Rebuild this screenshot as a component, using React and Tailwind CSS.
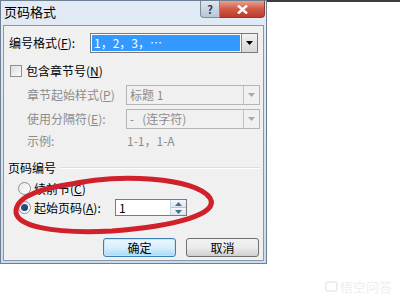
import React from "react";

const F = { fontFamily: '"Noto Sans CJK SC", "Noto Sans", sans-serif' };

function Arrow({ color = "#000" }) {
  return (
    <svg width="7" height="4" viewBox="0 0 7 4">
      <path d="M0 0 L7 0 L3.5 4 Z" fill={color} />
    </svg>
  );
}

function Combo({ width, children, disabled, selected }) {
  return (
    <div
      className={`flex h-[20px] border ${disabled ? "border-[#b5b5b5] bg-[#f0f0f0]" : "border-[#7a7a7a] bg-white"}`}
      style={{ width }}
    >
      <div className="flex-1 flex items-center p-[1px]">
        <div
          className={`h-full w-full flex items-center pl-[2px] text-[12px] leading-none ${selected ? "bg-[#3399ff] text-white" : disabled ? "text-[#8c8c8c]" : "text-black"}`}
        >
          {children}
        </div>
      </div>
      <div
        className={`w-[16px] flex items-center justify-center border-l ${disabled ? "border-[#c3c3c3] bg-[#f0f0f0]" : "border-[#8a8a8a] bg-gradient-to-b from-[#f2f2f2] to-[#d6d6d6]"}`}
      >
        <Arrow color={disabled ? "#a8a8a8" : "#000"} />
      </div>
    </div>
  );
}

function Radio({ checked }) {
  return (
    <div className="w-[13px] h-[13px] rounded-full border border-[#8e8f8f] bg-gradient-to-br from-[#e8e8e8] to-[#ffffff] flex items-center justify-center">
      {checked && <div className="w-[7px] h-[7px] rounded-full bg-gradient-to-br from-[#2a5c8f] to-[#1b3b66]" />}
    </div>
  );
}

export default function App() {
  return (
    <div className="w-[400px] h-[300px] bg-white relative overflow-hidden flex" style={F}>
      {/* Dialog window */}
      <div className="w-[267px] h-[264px] border border-[#6e7f94] bg-gradient-to-b from-[#e2ebf5] to-[#cddcec] flex flex-col shrink-0">
        {/* title bar */}
        <div className="h-[24px] flex items-start">
          <div className="pl-[3px] pt-[3px] text-[13px] leading-[16px] text-black">页码格式</div>
          <div className="flex-1" />
          <div className="w-[20px] h-[17px] border border-t-0 border-[#7d8a99] rounded-bl-[4px] bg-gradient-to-b from-[#dfe6ee] to-[#b9c6d4] flex items-center justify-center text-[11px] font-bold text-[#2d3b4c] leading-none">
            ?
          </div>
          <div className="w-[45px] h-[17px] border border-t-0 border-l-0 border-[#8a3b33] rounded-br-[4px] bg-gradient-to-b from-[#e6a191] via-[#cf5a46] to-[#c0392b] flex items-center justify-center mr-[1px]">
            <svg width="11" height="9" viewBox="0 0 11 9">
              <path d="M1 0.5 L10 8.5 M10 0.5 L1 8.5" stroke="#fff" strokeWidth="2.4" />
            </svg>
          </div>
        </div>

        {/* client area */}
        <div className="mx-[2px] mb-[2px] flex-1 border border-[#8798ad] bg-[#f0f0f0] flex flex-col text-[12px] leading-none text-black">
          {/* row 1 */}
          <div className="mt-[7px] flex items-center">
            <div className="w-[86px] pl-[5px]">编号格式(<u>F</u>):</div>
            <Combo width={168} selected>
              1，2，3，…
            </Combo>
          </div>

          {/* checkbox */}
          <div className="mt-[11px] flex items-center h-[13px]">
            <div className="ml-[6px] w-[12px] h-[12px] border border-[#8e8f8f] bg-gradient-to-br from-[#dcdcdc] to-[#fbfbfb]" />
            <div className="ml-[4px]">包含章节号(<u>N</u>)</div>
          </div>

          {/* disabled rows */}
          <div className="mt-[8px] flex items-center">
            <div className="w-[122px] pl-[23px] text-[#8c8c8c]">章节起始样式(<u>P</u>)</div>
            <Combo width={134} disabled>
              标题 1
            </Combo>
          </div>
          <div className="mt-[4px] flex items-center">
            <div className="w-[122px] pl-[23px] text-[#8c8c8c]">使用分隔符(<u>E</u>):</div>
            <Combo width={134} disabled>
              -&nbsp;&nbsp;&nbsp;(连字符)
            </Combo>
          </div>
          <div className="mt-[5px] flex items-center h-[14px] text-[#8c8c8c]">
            <div className="w-[122px] pl-[23px]">示例:</div>
            <div className="pl-[1px]">1-1，1-A</div>
          </div>

          {/* group */}
          <div className="mt-[13px] flex items-center h-[14px]">
            <div className="pl-[4px] pr-[4px]">页码编号</div>
            <div className="flex-1 mr-[3px] h-[2px] border-t border-b border-t-[#d5dfe5] border-b-white" />
          </div>

          <div className="mt-[7px] flex items-center h-[13px]">
            <div className="ml-[14px]">
              <Radio />
            </div>
            <div className="ml-[3px]">续前节(<u>C</u>)</div>
          </div>

          <div className="mt-[4px] flex items-center h-[17px]">
            <div className="ml-[14px]">
              <Radio checked />
            </div>
            <div className="ml-[3px] w-[81px]">起始页码(<u>A</u>):</div>
            <div className="w-[72px] h-[17px] border border-[#7a7a7a] bg-white flex">
              <div className="flex-1 pl-[3px] flex items-center">1</div>
              <div className="w-[16px] flex flex-col border-l border-[#c9d3de]">
                <div className="flex-1 flex items-center justify-center bg-gradient-to-b from-[#f4f7fa] to-[#dde5ee] border-b border-[#b8c4d1]">
                  <svg width="7" height="4" viewBox="0 0 7 4"><path d="M0 4 L7 4 L3.5 0 Z" fill="#4d6a8a" /></svg>
                </div>
                <div className="flex-1 flex items-center justify-center bg-gradient-to-b from-[#f4f7fa] to-[#dde5ee]">
                  <Arrow color="#4d6a8a" />
                </div>
              </div>
            </div>
          </div>

          {/* buttons */}
          <div className="mt-[22px] flex justify-end gap-[10px] pr-[4px]">
            <div className="w-[73px] h-[19px] rounded-[3px] border border-[#3c7fb1] bg-gradient-to-b from-[#eaf6fd] via-[#d9f0fc] to-[#a7d9f5] flex items-center justify-center shadow-[inset_0_0_0_1px_#c4e5f6]">
              确定
            </div>
            <div className="w-[73px] h-[19px] rounded-[3px] border border-[#707070] bg-gradient-to-b from-[#f2f2f2] via-[#ebebeb] to-[#cfcfcf] flex items-center justify-center">
              取消
            </div>
          </div>
        </div>
      </div>

      {/* right side */}
      <div className="flex-1 flex flex-col">
        <div className="h-[2px] bg-[#3c3c3c]" />
        <div className="flex-1" />
        <div className="self-end mr-[8px] mb-[7px] flex items-center gap-[2px] text-[13px] text-[#eeeeee] leading-none">
          <span className="w-[13px] h-[11px] rounded-[3px] border-2 border-[#eeeeee]" />
          <span>悟空问答</span>
        </div>
      </div>

      {/* red hand-drawn ellipse overlay */}
      <svg className="absolute left-0 top-0 pointer-events-none" width="400" height="300" viewBox="0 0 400 300">
        <path
          d="M62 186 C120 172, 196 178, 210 198 C220 214, 176 226, 112 231 C52 234, 14 226, 16 210 C18 196, 40 188, 84 182"
          fill="none"
          stroke="#d0202b"
          strokeWidth="5"
          strokeLinecap="round"
        />
      </svg>
    </div>
  );
}
